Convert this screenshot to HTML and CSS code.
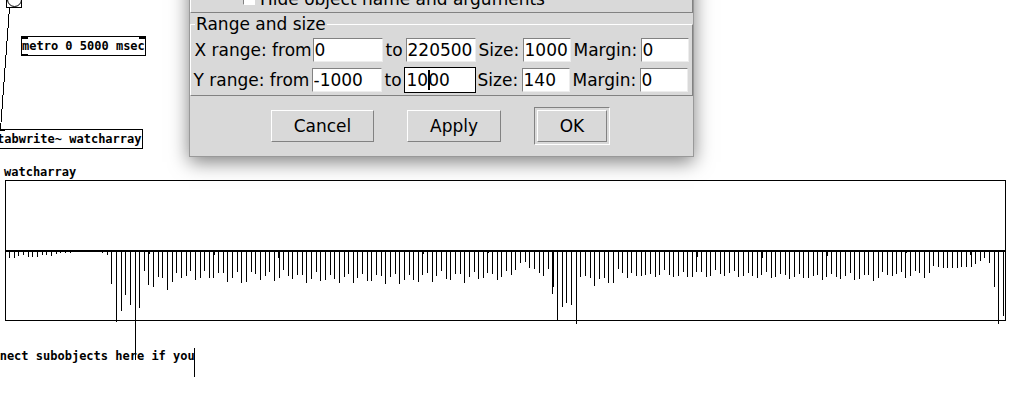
FILE: index.html
```html
<!DOCTYPE html>
<html lang="en">
<head>
<meta charset="utf-8">
<title>Patch canvas</title>
<link rel="stylesheet" href="styles.css">
</head>
<body>
<main class="canvas">
  <svg class="drawing" width="1012" height="403" viewBox="0 0 1012 403" aria-hidden="true">
    <g transform="translate(.5 .5)">
      <path d="M6 -8H21V7H6Z"/>
      <circle class="smooth" cx="14" cy="-1" r="7"/>
      <path d="M9 7L0 129"/>
      <path d="M5 180H1005V320H5Z"/>
      <path d="M194 347V376"/>
    </g>
    <path class="axis" d="M5 251H1005"/>
    <g transform="translate(.5 0)">
      <path d="M9 250V258M14 250V258M18 250V256M23 250V255M28 250V257M32 250V257M37 250V257M42 250V255M46 250V255M51 250V256M56 250V254M60 250V253M65 250V253M70 250V253M102 250V253M107 250V255M111 250V284M116 250V322M121 250V311M125 250V295M130 250V305M135 250V360M139 250V308M144 250V271M148 250V285M149 250V254M153 250V287M158 250V277M162 250V278M167 250V290M172 250V282M176 250V273M181 250V278M186 250V276M190 250V271M195 250V280"/>
      <path d="M200 250V278M204 250V271M209 250V278M213 250V278M214 250V255M218 250V273M223 250V273M227 250V282M232 250V278M237 250V272M241 250V283M246 250V282M251 250V272M255 250V274M260 250V280M265 250V276M269 250V272M274 250V281M278 250V258M279 250V278M283 250V270M288 250V276M292 250V279M297 250V275M302 250V275M306 250V283M311 250V279M316 250V272M320 250V281M325 250V280M330 250V275M334 250V279M339 250V283M344 250V277M348 250V274M353 250V283M357 250V278M362 250V274M367 250V281M371 250V281M376 250V275M381 250V276M385 250V284"/>
      <path d="M390 250V277M395 250V274M399 250V284M404 250V280M409 250V275M413 250V280M418 250V282M422 250V275M423 250V254M427 250V273M432 250V282M436 250V276M441 250V271M446 250V279M450 250V280M455 250V274M460 250V274M464 250V283M469 250V277M474 250V272M478 250V279M483 250V278M487 250V273M488 250V253M492 250V274M497 250V280M501 250V277M506 250V271M511 250V275M515 250V270M520 250V263M525 250V262M529 250V268M534 250V269M539 250V273M543 250V276M548 250V269M552 250V294M553 250V287M557 250V320M562 250V307M566 250V303"/>
      <path d="M571 250V305M576 250V324M580 250V277M585 250V276M590 250V278M594 250V286M599 250V279M604 250V278M608 250V283M613 250V283M618 250V269M622 250V273M627 250V278M631 250V273M636 250V276M641 250V276M645 250V275M650 250V274M655 250V277M659 250V275M664 250V270M669 250V275M673 250V277M678 250V276M683 250V272M687 250V277M692 250V277M696 250V272M697 250V257M701 250V272M706 250V277M710 250V276M715 250V270M720 250V274M724 250V276M729 250V273M734 250V271M738 250V277M743 250V276M748 250V273"/>
      <path d="M752 250V276M757 250V278M761 250V275M762 250V258M766 250V272M771 250V278M775 250V277M780 250V274M785 250V275M789 250V279M794 250V277M799 250V274M803 250V278M808 250V278M813 250V276M817 250V275M822 250V280M826 250V277M827 250V256M831 250V274M836 250V277M840 250V279M845 250V276M850 250V273M854 250V280M859 250V279M864 250V275M868 250V275M873 250V281M878 250V278M882 250V272M887 250V275M892 250V276M896 250V274M901 250V272M905 250V278M906 250V253M910 250V276M915 250V271M919 250V273M924 250V278M929 250V273"/>
      <path d="M933 250V266M938 250V267M943 250V268M947 250V268M952 250V268M957 250V268M961 250V267M966 250V267M970 250V255M971 250V267M975 250V264M980 250V261M984 250V258M989 250V263M994 250V287M998 250V324M1003 250V316"/>
    </g>
  </svg>

  <div class="object metro">metro 0 5000 msec</div>
  <div class="object tabwrite">tabwrite~ watcharray</div>
  <div class="label array-name">watcharray</div>
  <div class="label comment">connect subobjects here if you</div>

  <form class="dialog">
    <fieldset class="group appearance">
      <label class="check"><input type="checkbox">Hide object name and arguments</label>
    </fieldset>
    <fieldset class="group range">
      <legend>Range and size</legend>
      <div class="row">
        <label class="from" for="x-from">X range: from</label>
        <input class="wide" id="x-from" type="text" value="0">
        <label class="to" for="x-to">to</label>
        <input class="wide" id="x-to" type="text" value="220500">
        <label class="size" for="x-size">Size:</label>
        <input class="narrow" id="x-size" type="text" value="1000">
        <label class="margin" for="x-margin">Margin:</label>
        <input class="narrow" id="x-margin" type="text" value="0">
      </div>
      <div class="row y-row">
        <label class="from" for="y-from">Y range: from</label>
        <input class="wide" id="y-from" type="text" value="-1000">
        <label class="to" for="y-to">to</label>
        <span class="editing"><input class="wide active" id="y-to" type="text" value="1000"><span class="caret"></span></span>
        <label class="size" for="y-size">Size:</label>
        <input class="narrow" id="y-size" type="text" value="140">
        <label class="margin" for="y-margin">Margin:</label>
        <input class="narrow" id="y-margin" type="text" value="0">
      </div>
    </fieldset>
    <div class="actions">
      <button class="cancel" type="button">Cancel</button>
      <button class="apply" type="button">Apply</button>
      <span class="default"><button class="ok" type="button">OK</button></span>
    </div>
  </form>
</main>
</body>
</html>
```
FILE: styles.css
```css
* { box-sizing: border-box; }
body { margin: 0; background: #fff; color: #000; }

.canvas {
  position: relative;
  min-height: 100vh;
  overflow: hidden;
  font: bold 12px/16px "DejaVu Sans Mono", monospace;
}
.drawing {
  display: block;
  fill: none;
  stroke: #000;
  shape-rendering: crispEdges;
}
.smooth { shape-rendering: auto; }
.axis { stroke-width: 2; }

.object, .label { position: absolute; white-space: nowrap; font-size: 12px; }
.object { border: 1px solid #000; padding: 1px 0; }
.object::before, .object::after {
  content: "";
  position: absolute;
  left: 0;
  width: 6px;
  height: 2px;
  background: #000;
}
.object::before { top: 0; }
.metro { left: 21px; top: 36px; }
.metro::before { width: auto; right: 0; background: linear-gradient(#000, #000) left / 6px 2px no-repeat, linear-gradient(#000, #000) right / 6px 2px no-repeat; }
.metro::after { bottom: 0; height: 1px; }
.tabwrite { left: -4px; top: 129px; }
.tabwrite::before { width: 8px; height: 1px; }
.tabwrite::after { display: none; }
.array-name { left: 4px; top: 164px; }
.comment { left: -22px; top: 348px; }

.dialog {
  position: absolute;
  left: 189px;
  top: -28px;
  width: 505px;
  border: 1px solid #999;
  background: #d9d9d9;
  box-shadow: 0 5px 18px rgba(0, 0, 0, .5);
  font: 17px/20px "DejaVu Sans", sans-serif;
}
.dialog input, .dialog button { font: inherit; color: inherit; margin: 0; }
.group {
  min-width: 0;
  margin: 0;
  padding: 0;
  border: 1px solid;
  border-color: #fff #828282 #828282 #fff;
}
.appearance { height: 40px; padding: 15px 0 0 52px; }
.check { display: flex; align-items: center; gap: 5px; }
.check input {
  appearance: none;
  width: 12px;
  height: 12px;
  background: #fff;
  border: 1px solid;
  border-color: #828282 #fff #fff #828282;
}
.range legend { margin-left: 4px; padding: 0 1px; line-height: 22px; }
.row { display: flex; justify-content: center; align-items: center; padding: 3px 0; }
.row input {
  height: 24px;
  padding: 0 1px;
  border: 1px solid;
  border-color: #828282 #ededed #ededed #828282;
  border-radius: 0;
  background: #fff;
}
.from { width: 118px; }
.to { width: 23px; padding-left: 3px; }
.size { width: 47px; padding-left: 3px; }
.margin { width: 70px; padding-left: 3px; }
.wide { width: 70px; }
.narrow { width: 48px; }
.y-row { padding-right: 2px; }
.editing { position: relative; display: flex; }
.row .active { border-color: #fff; outline: 1px solid #000; }
.caret { position: absolute; left: 23px; top: 2px; width: 2px; height: 20px; background: #000; }

.actions {
  display: flex;
  justify-content: center;
  align-items: center;
  gap: 33px;
  padding: 11px 2px 11px 0;
}
.dialog button {
  height: 32px;
  padding: 0;
  background: #d9d9d9;
  border: 1px solid;
  border-color: #fff #828282 #828282 #fff;
  border-radius: 0;
}
.cancel { width: 103px; }
.apply { width: 94px; }
.ok { width: 70px; }
.default {
  display: flex;
  padding: 2px;
  border: 1px solid;
  border-color: #828282 #fff #fff #828282;
}
```
